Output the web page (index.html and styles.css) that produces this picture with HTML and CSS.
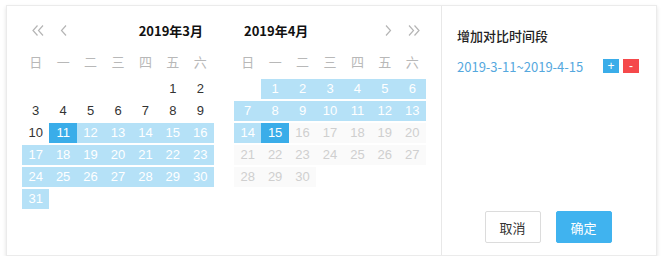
FILE: index.html
```html
<!DOCTYPE html>
<html lang="zh-CN">
<head>
    <meta charset="UTF-8">
    <title>对比时间段</title>
    <link rel="stylesheet" href="styles.css">
</head>
<body>
    <div class="picker">
        <div class="calendars">
            <!-- March -->
            <div class="calendar">
                <div class="cal-head">
                    <div class="nav">
                        <svg class="icon-dbl" width="12" height="11" viewBox="0 0 12 11"><polyline points="5.5,0.5 1,5.5 5.5,10.5"/><polyline points="11,0.5 6.5,5.5 11,10.5"/></svg>
                        <svg class="icon-one" width="7" height="11" viewBox="0 0 7 11"><polyline points="6,0.5 1.5,5.5 6,10.5"/></svg>
                    </div>
                    <span class="cal-title">2019年3月</span>
                </div>
                <div class="weekdays">
                    <span>日</span><span>一</span><span>二</span><span>三</span><span>四</span><span>五</span><span>六</span>
                </div>
                <div class="days">
                    <span class="day empty"></span><span class="day empty"></span><span class="day empty"></span><span class="day empty"></span><span class="day empty"></span><span class="day">1</span><span class="day">2</span>
                    <span class="day">3</span><span class="day">4</span><span class="day">5</span><span class="day">6</span><span class="day">7</span><span class="day">8</span><span class="day">9</span>
                    <span class="day">10</span><span class="day selected">11</span><span class="day in-range">12</span><span class="day in-range">13</span><span class="day in-range">14</span><span class="day in-range">15</span><span class="day in-range">16</span>
                    <span class="day in-range">17</span><span class="day in-range">18</span><span class="day in-range">19</span><span class="day in-range">20</span><span class="day in-range">21</span><span class="day in-range">22</span><span class="day in-range">23</span>
                    <span class="day in-range">24</span><span class="day in-range">25</span><span class="day in-range">26</span><span class="day in-range">27</span><span class="day in-range">28</span><span class="day in-range">29</span><span class="day in-range">30</span>
                    <span class="day in-range">31</span>
                </div>
            </div>

            <!-- April -->
            <div class="calendar">
                <div class="cal-head right">
                    <span class="cal-title">2019年4月</span>
                    <div class="nav">
                        <svg class="icon-one" width="7" height="11" viewBox="0 0 7 11"><polyline points="1,0.5 5.5,5.5 1,10.5"/></svg>
                        <svg class="icon-dbl" width="12" height="11" viewBox="0 0 12 11"><polyline points="1,0.5 5.5,5.5 1,10.5"/><polyline points="6.5,0.5 11,5.5 6.5,10.5"/></svg>
                    </div>
                </div>
                <div class="weekdays">
                    <span>日</span><span>一</span><span>二</span><span>三</span><span>四</span><span>五</span><span>六</span>
                </div>
                <div class="days">
                    <span class="day empty"></span><span class="day in-range">1</span><span class="day in-range">2</span><span class="day in-range">3</span><span class="day in-range">4</span><span class="day in-range">5</span><span class="day in-range">6</span>
                    <span class="day in-range">7</span><span class="day in-range">8</span><span class="day in-range">9</span><span class="day in-range">10</span><span class="day in-range">11</span><span class="day in-range">12</span><span class="day in-range">13</span>
                    <span class="day in-range">14</span><span class="day selected">15</span><span class="day disabled">16</span><span class="day disabled">17</span><span class="day disabled">18</span><span class="day disabled">19</span><span class="day disabled">20</span>
                    <span class="day disabled">21</span><span class="day disabled">22</span><span class="day disabled">23</span><span class="day disabled">24</span><span class="day disabled">25</span><span class="day disabled">26</span><span class="day disabled">27</span>
                    <span class="day disabled">28</span><span class="day disabled">29</span><span class="day disabled">30</span>
                </div>
            </div>
        </div>

        <div class="side">
            <h3 class="side-title">增加对比时间段</h3>
            <div class="range-row">
                <span class="range-text">2019-3-11~2019-4-15</span>
                <div class="range-actions">
                    <button class="mini-btn add">+</button>
                    <button class="mini-btn remove">-</button>
                </div>
            </div>
            <div class="footer">
                <button class="btn btn-cancel">取消</button>
                <button class="btn btn-ok">确定</button>
            </div>
        </div>
    </div>
</body>
</html>
```

FILE: styles.css
```css
body {
    margin: 0;
    background-color: #fff;
    font-family: "Liberation Sans", "Noto Sans CJK SC", sans-serif;
    color: #333;
}

.picker {
    display: flex;
    width: 649px;
    height: 249px;
    margin: 5px 0 0 6px;
    border: 1px solid #ebebeb;
    background-color: #fff;
    box-shadow: 0 2px 4px rgba(0, 0, 0, 0.12);
}

.calendars {
    display: flex;
    gap: 20px;
    padding: 12px 15px 0 15px;
}

.calendar {
    width: 192px;
}

.cal-head {
    display: flex;
    align-items: center;
    justify-content: space-between;
    height: 24px;
    padding: 0 11px 0 10px;
}

.cal-head.right {
    padding: 0 6px 0 10px;
}

.cal-title {
    font-family: "Noto Sans CJK SC", sans-serif;
    font-size: 13px;
    font-weight: bold;
    color: #111;
}

.nav {
    display: flex;
    align-items: center;
    gap: 16px;
}

.nav svg {
    display: block;
    fill: none;
    stroke: #b5b5b5;
    stroke-width: 1.2;
}

.weekdays {
    display: grid;
    grid-template-columns: repeat(7, 1fr);
    height: 24px;
    margin: 8px 0 5px;
    line-height: 24px;
    text-align: center;
    font-family: "Noto Sans CJK SC", sans-serif;
    font-size: 13px;
    color: #b8b8b8;
}

.days {
    display: grid;
    grid-template-columns: repeat(7, 1fr);
    grid-auto-rows: 20px;
    row-gap: 2px;
}

.day {
    line-height: 20px;
    text-align: center;
    font-size: 13px;
    color: #333;
}

.day.in-range {
    background-color: #b5e1f7;
    color: #fff;
}

.day.selected {
    background-color: #3aade9;
    color: #fff;
}

.day.disabled {
    background-color: #fafafa;
    color: #cfcfcf;
}

.side {
    display: flex;
    flex-direction: column;
    flex: 1;
    padding: 18px 17px 12px 15px;
    border-left: 1px solid #e8e8e8;
    font-family: "Noto Sans CJK SC", sans-serif;
}

.side-title {
    margin: 0;
    font-size: 13px;
    font-weight: 500;
    line-height: 24px;
    color: #222;
}

.range-row {
    display: flex;
    align-items: center;
    justify-content: space-between;
    margin-top: 9px;
    height: 18px;
}

.range-text {
    font-size: 13px;
    color: #55a8de;
}

.range-actions {
    display: flex;
    gap: 4px;
}

.mini-btn {
    width: 16px;
    height: 14px;
    padding: 0;
    border: none;
    font-family: "Liberation Sans", sans-serif;
    font-size: 12px;
    line-height: 14px;
    color: #fff;
}

.mini-btn.add {
    background-color: #3aade9;
}

.mini-btn.remove {
    background-color: #f5494b;
}

.footer {
    display: flex;
    justify-content: center;
    gap: 15px;
    margin-top: auto;
}

.btn {
    width: 56px;
    height: 32px;
    padding: 0;
    border-radius: 2px;
    font-family: "Noto Sans CJK SC", sans-serif;
    font-size: 13px;
}

.btn-cancel {
    border: 1px solid #dcdcdc;
    background-color: #fff;
    color: #333;
}

.btn-ok {
    border: 1px solid #40b3ef;
    background-color: #40b3ef;
    color: #fff;
}
```
